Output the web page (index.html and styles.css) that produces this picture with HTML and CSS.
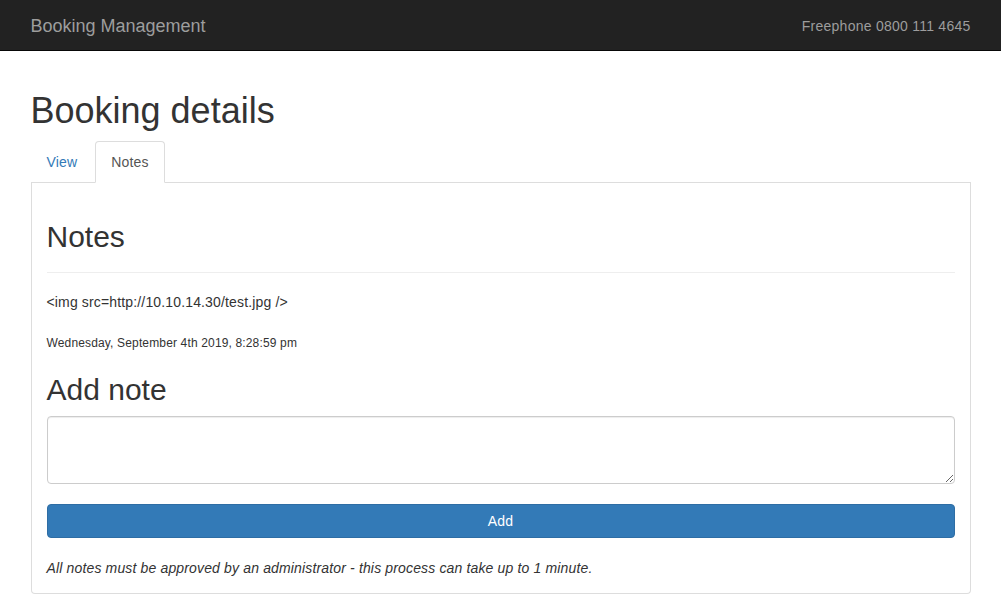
FILE: index.html
```html
<!DOCTYPE html>
<html lang="en">
<head>
<meta charset="utf-8">
<title>Booking Management</title>
<link rel="stylesheet" href="styles.css">
</head>
<body>
<nav class="navbar">
  <div class="navbar-inner">
    <span class="brand">Booking Management</span>
    <span class="navbar-text">Freephone 0800 111 4645</span>
  </div>
</nav>
<main class="container">
  <h1 class="title">Booking details</h1>
  <ul class="tabs">
    <li class="tab"><a class="tab-link" href="#">View</a></li>
    <li class="tab active"><a class="tab-link" href="#">Notes</a></li>
  </ul>
  <section class="tab-content">
    <div class="page-header">
      <h2 class="section-title">Notes</h2>
    </div>
    <div class="note">
      <p class="note-text">&lt;img src=http://10.10.14.30/test.jpg /&gt;</p>
      <p class="note-date">Wednesday, September 4th 2019, 8:28:59 pm</p>
    </div>
    <h2 class="section-title add-title">Add note</h2>
    <form class="note-form">
      <textarea class="form-control"></textarea>
      <button type="button" class="btn-add">Add</button>
    </form>
    <p class="disclaimer">All notes must be approved by an administrator - this process can take up to 1 minute.</p>
  </section>
</main>
</body>
</html>
```

FILE: styles.css
```css
* {
  box-sizing: border-box;
}

html, body {
  margin: 0;
  padding: 0;
}

body {
  font-family: "Liberation Sans", Arial, Helvetica, sans-serif;
  font-size: 14px;
  line-height: 20px;
  letter-spacing: 0.15px;
  color: #333;
  background: #fff;
}

.navbar {
  background: #222;
  border-bottom: 1px solid #080808;
  height: 51px;
}

.navbar-inner {
  width: 970px;
  margin: 0 auto;
  padding: 1px 15px 0;
  height: 50px;
  display: flex;
  justify-content: space-between;
  align-items: center;
}

.brand {
  font-size: 18px;
  line-height: 20px;
  letter-spacing: 0;
  color: #9d9d9d;
}

.navbar-text {
  font-size: 14px;
  line-height: 20px;
  letter-spacing: 0.25px;
  color: #9d9d9d;
}

.container {
  width: 970px;
  margin: 0 auto;
  padding: 20px 15px 0;
}

.title {
  font-size: 36px;
  font-weight: 500;
  line-height: 1.1;
  letter-spacing: 0;
  margin: 20px 0 10px;
}

.tabs {
  list-style: none;
  margin: 0;
  padding: 0;
  display: flex;
  border-bottom: 1px solid #ddd;
}

.tab {
  margin-bottom: -1px;
  margin-right: 2px;
}

.tab-link {
  display: block;
  padding: 10px 15px;
  line-height: 20px;
  border: 1px solid transparent;
  border-radius: 4px 4px 0 0;
  color: #337ab7;
  text-decoration: none;
}

.tab.active .tab-link {
  color: #555;
  background: #fff;
  border-color: #ddd #ddd transparent;
}

.tab-content {
  border: 1px solid #ddd;
  border-top: none;
  border-radius: 0 0 4px 4px;
  padding: 17px 15px 15px;
}

.page-header {
  border-bottom: 1px solid #eee;
  padding-bottom: 9px;
  margin-bottom: 19px;
}

.section-title {
  font-size: 30px;
  font-weight: 500;
  line-height: 1.1;
  letter-spacing: 0;
  margin: 20px 0 10px;
}

.note-text {
  margin: 0;
}

.note-date {
  margin: 23px 0 0;
  font-size: 12px;
  line-height: 16px;
}

.add-title {
  margin-top: 22px;
}

.note-form {
  display: flex;
  flex-direction: column;
  gap: 20px;
}

.form-control {
  display: block;
  width: 100%;
  height: 68px;
  padding: 6px 12px;
  font-family: inherit;
  font-size: 14px;
  line-height: 20px;
  color: #555;
  border: 1px solid #ccc;
  border-radius: 4px;
  box-shadow: inset 0 1px 1px rgba(0, 0, 0, .075);
  resize: vertical;
  margin: 0;
}

.btn-add {
  display: block;
  width: 100%;
  height: 34px;
  padding: 6px 12px;
  font-family: inherit;
  font-size: 14px;
  line-height: 20px;
  letter-spacing: 0.15px;
  color: #fff;
  background: #337ab7;
  border: 1px solid #2e6da4;
  border-radius: 4px;
  cursor: pointer;
}

.disclaimer {
  margin: 20px 0 0;
  font-style: italic;
}
```
